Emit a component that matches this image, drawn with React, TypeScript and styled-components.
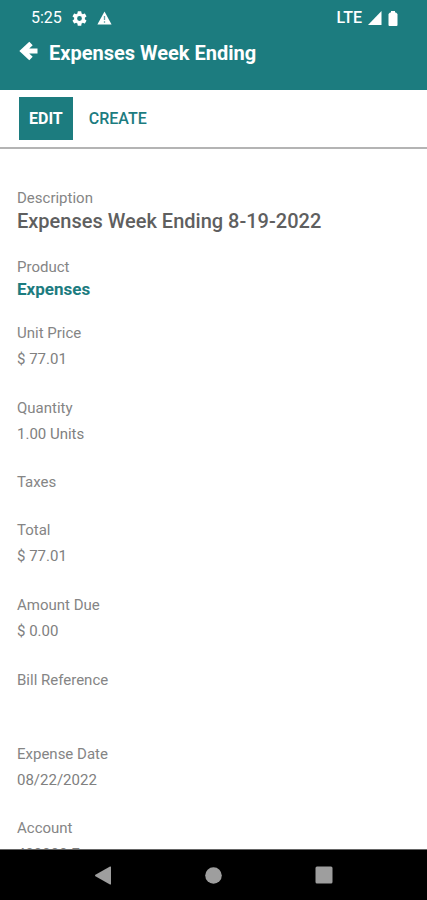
import React from "react";
import styled, { createGlobalStyle } from "styled-components";

const teal = "#1c7c7f";

const GlobalStyle = createGlobalStyle`
  * { box-sizing: border-box; }
  html, body, #root { height: 100%; margin: 0; }
  body { font-family: Roboto, "Liberation Sans", sans-serif; background: #fff; }
`;

const Screen = styled.div`
  display: flex;
  flex-direction: column;
  height: 100vh;
  overflow: hidden;
`;

const Header = styled.header`
  flex: none;
  background: ${teal};
  color: #fff;
  padding-bottom: 20px;
`;

const StatusBar = styled.div`
  display: flex;
  align-items: center;
  justify-content: space-between;
  height: 36px;
  padding: 0 29px 0 31px;
  font-size: 16px;
  line-height: 36px;
`;

const StatusGroup = styled.div<{ $gap: number }>`
  display: flex;
  align-items: center;
  gap: ${(p) => p.$gap}px;
`;

const Network = styled.span`
  font-weight: 500;
`;

const TitleBar = styled.div`
  display: flex;
  align-items: center;
  gap: 10px;
  height: 34px;
  padding-left: 19px;
`;

const BackButton = styled.button`
  display: flex;
  padding: 0 0 4px;
  border: 0;
  background: none;
  color: inherit;
`;

const Title = styled.h1`
  margin: 0;
  font-size: 20px;
  font-weight: 700;
  line-height: 34px;
`;

const Toolbar = styled.div`
  flex: none;
  display: flex;
  align-items: center;
  gap: 6px;
  height: 59px;
  padding: 0 19px;
  border-bottom: 2px solid #b4b4b4;
`;

const ActionButton = styled.button<{ $primary?: boolean }>`
  height: 43px;
  padding: 0 10px;
  border: 0;
  background: ${(p) => (p.$primary ? teal : "transparent")};
  color: ${(p) => (p.$primary ? "#fff" : teal)};
  font-family: inherit;
  font-size: 16px;
  font-weight: ${(p) => (p.$primary ? 700 : 500)};
`;

const Details = styled.dl`
  flex: 1;
  min-height: 0;
  overflow: hidden;
  display: flex;
  flex-direction: column;
  gap: 22px;
  margin: 0;
  padding: 36px 17px 0;
`;

const Field = styled.div`
  flex: none;
`;

const Label = styled.dt`
  color: #858585;
  font-size: 15px;
  line-height: 26px;
`;

type Kind = "text" | "money" | "heading" | "link";

const valueHeight: Record<Kind, number> = { text: 26, money: 27, heading: 21, link: 18 };

const Value = styled.dd<{ $kind: Kind }>`
  margin: 0;
  min-height: ${(p) => valueHeight[p.$kind]}px;
  line-height: ${(p) => valueHeight[p.$kind]}px;
  font-size: ${(p) => (p.$kind === "heading" ? 20 : p.$kind === "link" ? 17 : 15)}px;
  font-weight: ${(p) => (p.$kind === "heading" ? 500 : p.$kind === "link" ? 700 : 400)};
  color: ${(p) => (p.$kind === "heading" ? "#5f5f5f" : "#808080")};
`;

const ValueLink = styled.a`
  color: ${teal};
  text-decoration: none;
`;

const NavBar = styled.nav`
  flex: none;
  display: grid;
  grid-template-columns: repeat(3, 1fr);
  height: 51px;
  padding: 0 48px;
  border-top: 1px solid #666;
  background: #000;
`;

const NavButton = styled.button`
  display: flex;
  align-items: center;
  justify-content: center;
  padding: 0;
  border: 0;
  background: none;
  color: #9e9e9e;
`;

const fields: { label: string; value?: string; kind?: Kind }[] = [
  { label: "Description", value: "Expenses Week Ending 8-19-2022", kind: "heading" },
  { label: "Product", value: "Expenses", kind: "link" },
  { label: "Unit Price", value: "$ 77.01", kind: "money" },
  { label: "Quantity", value: "1.00 Units" },
  { label: "Taxes" },
  { label: "Total", value: "$ 77.01", kind: "money" },
  { label: "Amount Due", value: "$ 0.00", kind: "money" },
  { label: "Bill Reference", value: "" },
  { label: "Expense Date", value: "08/22/2022" },
  { label: "Account", value: "400000 E" },
];

export default function App() {
  return (
    <Screen>
      <GlobalStyle />
      <Header>
        <StatusBar>
          <StatusGroup $gap={10}>
            <span>5:25</span>
            <svg width="15" height="15" viewBox="2 2 20 20" fill="currentColor" aria-hidden="true">
              <path d="M19.14 12.94c.04-.3.06-.61.06-.94s-.02-.64-.07-.94l2.03-1.58a.49.49 0 0 0 .12-.61l-1.92-3.32a.49.49 0 0 0-.59-.22l-2.39.96a7 7 0 0 0-1.62-.94l-.36-2.54a.48.48 0 0 0-.48-.41h-3.84a.47.47 0 0 0-.47.41l-.36 2.54c-.59.24-1.13.57-1.62.94l-2.39-.96a.47.47 0 0 0-.59.22L2.74 8.87a.47.47 0 0 0 .12.61l2.03 1.58a6 6 0 0 0-.02 1.88l-2.03 1.58a.49.49 0 0 0-.12.61l1.92 3.32c.12.22.37.29.59.22l2.39-.96c.5.38 1.03.7 1.62.94l.36 2.54c.05.24.24.41.48.41h3.84c.24 0 .44-.17.47-.41l.36-2.54c.59-.24 1.13-.56 1.62-.94l2.39.96c.22.08.47 0 .59-.22l1.92-3.32a.47.47 0 0 0-.12-.61zM12 15.2a3.2 3.2 0 1 1 0-6.4 3.2 3.2 0 0 1 0 6.4z" />
            </svg>
            <svg width="15" height="14" viewBox="0 0 15 14" aria-hidden="true">
              <path d="M7.5.5 14.6 13.4H.4z" fill="#fff" />
              <path d="M7.5 5v4M7.5 10.2v1.6" stroke={teal} strokeWidth="1.3" opacity=".7" />
            </svg>
          </StatusGroup>
          <StatusGroup $gap={6}>
            <Network>LTE</Network>
            <svg width="14" height="14" viewBox="0 0 14 14" aria-hidden="true">
              <path d="M13.5 0v14H0z" fill="#fff" />
            </svg>
            <svg width="10" height="15" viewBox="0 0 10 15" aria-hidden="true">
              <path d="M3 0h4v1.5h1L9.500 3V14q0 1-1 1h-7q-1 0-1-1V3L2 1.500h1z" fill="#fff" />
            </svg>
          </StatusGroup>
        </StatusBar>
        <TitleBar>
          <BackButton aria-label="Back">
            <svg width="20" height="20" viewBox="0 0 20 20" fill="none" stroke="currentColor" strokeWidth="5" aria-hidden="true">
              <path d="M12 2.500 4 10l8 7.500M5 10h13.500" />
            </svg>
          </BackButton>
          <Title>Expenses Week Ending</Title>
        </TitleBar>
      </Header>
      <Toolbar>
        <ActionButton $primary>EDIT</ActionButton>
        <ActionButton>CREATE</ActionButton>
      </Toolbar>
      <Details>
        {fields.map((f) => (
          <Field key={f.label}>
            <Label>{f.label}</Label>
            {f.value !== undefined && (
              <Value $kind={f.kind ?? "text"}>
                {f.kind === "link" ? <ValueLink href="#product">{f.value}</ValueLink> : f.value}
              </Value>
            )}
          </Field>
        ))}
      </Details>
      <NavBar>
        <NavButton aria-label="Back">
          <svg width="16" height="19" viewBox="0 0 16 19" fill="currentColor" aria-hidden="true">
            <path d="M15 .5q1-.4 1 .6v16.8q0 1-1 .6L.4 10.2q-.8-.7 0-1.4z" />
          </svg>
        </NavButton>
        <NavButton aria-label="Home">
          <svg width="17" height="17" viewBox="0 0 17 17" fill="currentColor" aria-hidden="true">
            <circle cx="8.5" cy="8.5" r="8.3" />
          </svg>
        </NavButton>
        <NavButton aria-label="Recent apps">
          <svg width="18" height="18" viewBox="0 0 18 18" fill="currentColor" aria-hidden="true">
            <rect x=".5" y=".5" width="17" height="17" rx="1.5" />
          </svg>
        </NavButton>
      </NavBar>
    </Screen>
  );
}
